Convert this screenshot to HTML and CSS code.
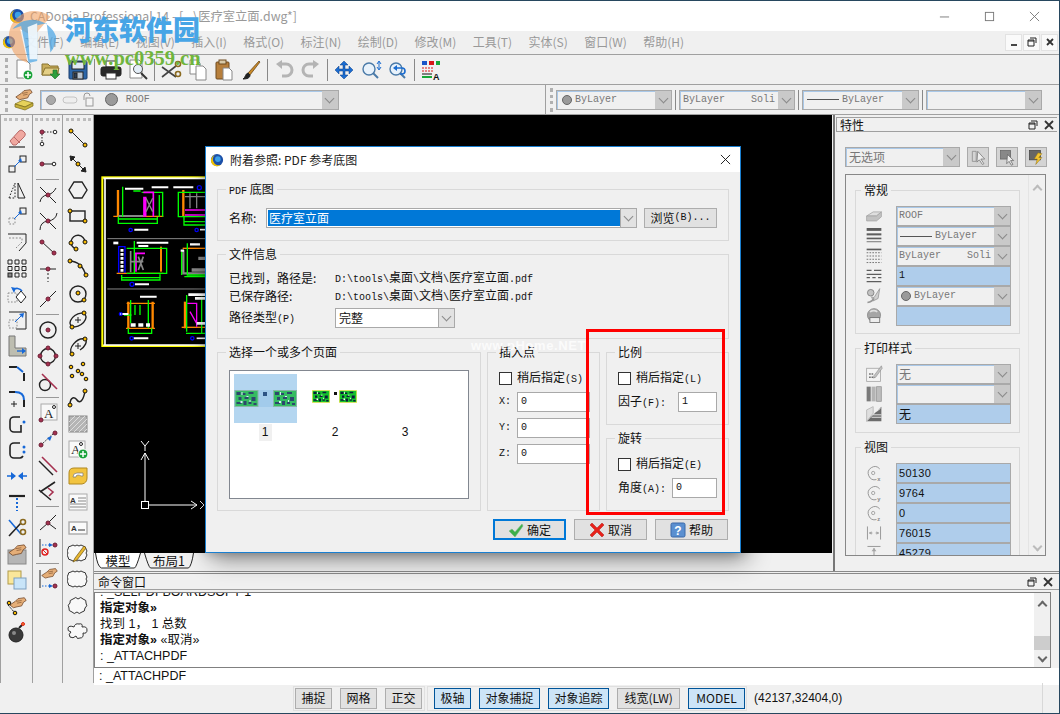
FILE: index.html
```html
<!DOCTYPE html>
<html lang="zh-CN">
<head>
<meta charset="utf-8">
<title>CADopia Professional 14</title>
<link rel="stylesheet" href="styles.css">
</head>
<body>
<svg class="defs">
  <symbol id="logo" viewBox="0 0 16 16"><circle cx="8" cy="8" r="7" fill="#1c4fa8"/><path d="M2 12a7 7 0 0 0 11 1 6 6 0 0 1-9-3 6 6 0 0 1 2-8 7 7 0 0 0-4 10z" fill="#f2c200"/><circle cx="9" cy="7" r="3.2" fill="#3aa0e8"/></symbol>
  <symbol id="hand" viewBox="0 0 22 22"><path d="M2 11l6-4 3-3 7-1 2 3-3 2-2 4-5 1-4 1z" fill="#e5ae78" stroke="#6a4022" stroke-width=".8"/><path d="M9 7l6-1M10 9l5-1" stroke="#6a4022" stroke-width=".6" fill="none"/></symbol>
  <symbol id="tile" viewBox="0 0 24 17"><rect width="24" height="17" fill="currentColor"/><rect x="1" y="1" width="22" height="15" fill="#17c12c"/><path d="M2 2h4v3H2zM8 3h3v2H8zM14 2h5v2h-5zM4 7h3v3H4zM10 7h4v2h-4zM17 7h4v4h-4zM2 12h5v2H2zM9 11h3v4H9zM14 12h3v2h-3zM19 13h3v2h-3z" fill="#0b1a3c"/><path d="M7 2h1v3H7zM12 6h2v1h-2zM6 11h2v2H6zM15 10h1v2h-1z" fill="#fff"/></symbol>
</svg>

<div class="app">
  <header class="titlebar">
    <svg class="logo16"><use href="#logo"/></svg>
    <span class="apptitle">CADopia Professional 14 - [...\医疗室立面.dwg*]</span>
    <div class="winctl">
      <svg class="wbtn" viewBox="0 0 12 12"><path d="M1 6.5h10"/></svg>
      <svg class="wbtn" viewBox="0 0 12 12"><rect x="1.5" y="1.5" width="9" height="9"/></svg>
      <svg class="wbtn" viewBox="0 0 12 12"><path d="M1 1l10 10M11 1L1 11"/></svg>
    </div>
  </header>

  <nav class="menubar">
    <svg class="logo-menu"><use href="#logo"/></svg>
    <ul class="menu">
      <li>文件(F)</li><li>编辑(E)</li><li>视图(V)</li><li>插入(I)</li><li>格式(O)</li><li>标注(N)</li><li>绘制(D)</li><li>修改(M)</li><li>工具(T)</li><li>实体(S)</li><li>窗口(W)</li><li>帮助(H)</li>
    </ul>
    <div class="mdi">
      <span class="mdibtn"><svg viewBox="0 0 10 10"><path d="M2 8h6" class="thick"/></svg></span>
      <span class="mdibtn"><svg viewBox="0 0 10 10"><path d="M3 1h6v5M1 3h6v6H1zM1 4h6" class="thin"/></svg></span>
      <span class="mdibtn"><svg viewBox="0 0 10 10"><path d="M2 2l6 6M8 2L2 8" class="thick"/></svg></span>
    </div>
  </nav>

  <div class="toolbar">
    <span class="vgrip"></span>
    <svg class="i tb" viewBox="0 0 22 22"><path class="paper" d="M4 1h9l4 4v14H4z"/><circle cx="15" cy="16" r="5" fill="#1ba23a" stroke="#fff"/><path d="M15 13v6M12 16h6" stroke="#fff" stroke-width="1.6"/></svg>
    <svg class="i tb" viewBox="0 0 22 22"><path d="M2 5h6l2 2h8v9H2z" fill="#c9ad5a" stroke="#8a7430"/><path d="M2 16l3-7h14l-2 7z" fill="#e4cf85" stroke="#8a7430"/><path d="M13 11h4v4h3l-5 5-5-5h3z" fill="#2e9e3c" stroke="#1b6a26" stroke-width=".6"/></svg>
    <svg class="i tb" viewBox="0 0 22 22"><rect x="2" y="2" width="18" height="18" rx="1" fill="#2c66a8" stroke="#1c3f6e"/><rect x="5" y="3" width="12" height="7" fill="#dfe8f2"/><rect x="6" y="13" width="10" height="7" fill="#b9c4d0"/><rect x="7" y="14" width="3" height="5" fill="#2c3f58"/></svg>
    <span class="vsep"></span>
    <svg class="i tb" viewBox="0 0 22 22"><rect x="6" y="2" width="10" height="6" fill="#fff" stroke="#333"/><rect x="1" y="8" width="20" height="9" rx="2" fill="#2a2a2a"/><rect x="6" y="14" width="10" height="6" fill="#fff" stroke="#333"/></svg>
    <svg class="i tb" viewBox="0 0 22 22"><path class="paper" d="M3 1h9l3 3v15H3z"/><circle cx="11" cy="10" r="4.5" fill="#e4eef8" stroke="#555"/><path d="M14 14l6 6" stroke="#333" stroke-width="2"/></svg>
    <span class="vsep"></span>
    <svg class="i tb" viewBox="0 0 22 22"><path d="M2 18L16 7M2 8l14 10" stroke="#444" stroke-width="1.6"/><circle cx="18" cy="5" r="2.5" stroke="#8a6a20" stroke-width="1.6"/><circle cx="18" cy="19" r="2.5" stroke="#8a6a20" stroke-width="1.6" transform="translate(0 -4)"/></svg>
    <svg class="i tb" viewBox="0 0 22 22"><path class="paper" d="M3 1h7l3 3v11H3z"/><path class="paper" d="M9 7h7l3 3v11H9z"/></svg>
    <svg class="i tb" viewBox="0 0 22 22"><rect x="3" y="3" width="13" height="17" rx="1" fill="#b77f3c" stroke="#6e4a1e"/><rect x="6" y="1" width="7" height="4" fill="#d8c9a8" stroke="#6e4a1e"/><path class="paper" d="M10 9h6l3 3v9h-9z"/></svg>
    <svg class="i tb" viewBox="0 0 22 22"><path d="M19 2L8 14l2 2L20 3z" fill="#c98a28" stroke="#5a3a10" stroke-width=".7"/><path d="M8 14c-3 1-2 4-5 6 4 0 7-1 7-4z" fill="#222"/></svg>
    <span class="vsep"></span>
    <svg class="i tb" viewBox="0 0 22 22"><path d="M7 5h6a5 5 0 0 1 0 12H9" stroke="#b4b4b4" stroke-width="3"/><path d="M9 1v9L3 5z" fill="#b4b4b4" stroke="none"/></svg>
    <svg class="i tb" viewBox="0 0 22 22"><path d="M15 5H9a5 5 0 0 0 0 12h4" stroke="#b4b4b4" stroke-width="3"/><path d="M13 1v9l6-5z" fill="#b4b4b4" stroke="none"/></svg>
    <span class="vsep"></span>
    <svg class="i tb" viewBox="0 0 22 22"><path d="M11 2l4 4h-3v4h4V7l4 4-4 4v-3h-4v4h3l-4 4-4-4h3v-4H6v3l-4-4 4-4v3h4V6H7z" fill="#1a6cd0" stroke="#0c3f86" stroke-width=".5"/></svg>
    <svg class="i tb" viewBox="0 0 22 22"><circle cx="9" cy="10" r="6" fill="#e8f2fb" stroke="#4a7aa8" stroke-width="1.4"/><path d="M13 14l5 5" stroke="#4a7aa8" stroke-width="2"/><path d="M19 3v7M17 5l2-3 2 3M17 8l2 3 2-3" stroke="#1a6cd0"/></svg>
    <svg class="i tb" viewBox="0 0 22 22"><circle cx="9" cy="10" r="6" fill="#e8f2fb" stroke="#4a7aa8" stroke-width="1.4"/><path d="M13 14l5 5" stroke="#4a7aa8" stroke-width="2"/><path d="M8 9h7a3 3 0 0 1 0 6h-2" stroke="#1a6cd0" stroke-width="1.6"/><path d="M10 6v6l-4-3z" fill="#1a6cd0" stroke="none"/></svg>
    <span class="vsep"></span>
    <svg class="i tb" viewBox="0 0 22 22"><path d="M2 2h5v4H2z" fill="#1a55c8" stroke="none"/><path d="M9 2h5v4H9z" fill="#d81818" stroke="none"/><path d="M16 2h4v4h-4z" fill="#18a838" stroke="none"/><path d="M2 9h12M2 12h12" stroke="#d81818" stroke-dasharray="2 1"/><path d="M2 15h10" stroke="#111"/><path d="M2 18h10" stroke="#18a838" stroke-width="2"/><text x="13" y="21" class="icon-a">A</text></svg>
  </div>

  <div class="toolbar tb2">
    <span class="vgrip"></span>
    <svg class="i tb" viewBox="0 0 22 22"><path d="M2 15l8-4 10 3-8 4z" fill="#e6d25a" stroke="#7a6a18" stroke-width=".7"/><path d="M2 18l10 3 8-4v-3l-8 4-10-3z" fill="#c8b23c" stroke="#7a6a18" stroke-width=".7"/><use href="#hand" x="1" y="-2" width="20" height="20"/></svg>
    <div class="combo layer">
      <span class="cval">
        <svg class="lyic" viewBox="0 0 58 16"><circle cx="7" cy="8" r="4.500" fill="#a8a8a8" stroke="#888"/><rect x="19" y="5" width="14" height="6" rx="3" stroke="#c4c4c4" fill="#eee"/><path d="M40 8V4a3 3 0 0 1 6 0" stroke="#999" fill="none"/><rect x="42" y="6" width="7" height="8" stroke="#999" fill="#f4f4f4"/></svg>
        <i class="dot big"></i><span class="m grey">ROOF</span>
      </span>
      <span class="arr"></span>
    </div>
    <span class="tb2-rest">
      <span class="vgrip g2"></span>
      <div class="combo c116"><span class="cval"><i class="dot"></i><span class="m grey">ByLayer</span></span><span class="arr"></span></div>
      <span class="bar"></span>
      <div class="combo c116"><span class="cval spread"><span class="m grey">ByLayer</span><span class="m grey">Soli</span></span><span class="arr"></span></div>
      <span class="bar"></span>
      <div class="combo c117"><span class="cval"><i class="lineglyph"></i><span class="m grey">ByLayer</span></span><span class="arr"></span></div>
      <span class="bar"></span>
      <div class="combo c116"><span class="cval"></span><span class="arr"></span></div>
    </span>
  </div>

  <main class="main">
    <aside class="lefttools">
      <div class="tcol">
        <span class="hgrip"></span>
        <svg class="i tl" viewBox="0 0 22 22"><path d="M4 14L13 4q2-2 4 0l2 2q1 2-1 4l-8 8H7z" fill="#f0a8a0" stroke="#b86a68"/><path d="M8 10l6 6" stroke="#b86a68"/><path d="M3 20h16" stroke="#777" stroke-width="2"/></svg>
        <svg class="i tl" viewBox="0 0 22 22"><rect x="3" y="13" width="6" height="6"/><rect x="14" y="3" width="6" height="6"/><path class="bl" d="M8 14l7-7"/><path class="bfl" d="M15 5l1 4-4-1z"/></svg>
        <svg class="i tl" viewBox="0 0 22 22"><path d="M3 19l6-15v15z" stroke-dasharray="1.6 1.6"/><path d="M12 4l7 15h-7z"/></svg>
        <svg class="i tl" viewBox="0 0 22 22"><rect x="3" y="13" width="6" height="6" stroke-dasharray="1.6 1.6" class="gs"/><rect x="14" y="3" width="6" height="6"/><path class="bl" d="M8 14l7-7"/><path class="bfl" d="M15 5l1 4-4-1z"/></svg>
        <svg class="i tl" viewBox="0 0 22 22"><path d="M2 3h18v9l-7 8"/><path class="gs" d="M3 7h13v4l-6 6" stroke-dasharray="1.8 1.6"/></svg>
        <svg class="i tl" viewBox="0 0 22 22"><path d="M2 3h4v4H2zM9 3h4v4H9zM16 3h4v4h-4zM2 9.500h4v4H2zM9 9.500h4v4H9zM16 9.500h4v4h-4zM9 16h4v4H9zM16 16h4v4h-4z"/><rect x="2" y="16" width="4" height="4" fill="#888"/></svg>
        <svg class="i tl" viewBox="0 0 22 22"><rect x="2" y="10" width="9" height="9" class="gs" stroke-dasharray="1.6 1.6"/><path d="M15 8l5 6-5 6-5-6z" fill="#fff"/><path class="bl" d="M7 7a6 6 0 0 1 9 1" stroke-width="1.6"/><path class="bfl" d="M5 4l3 6 2-5z"/></svg>
        <svg class="i tl" viewBox="0 0 22 22"><path d="M3 3h17v17H10"/><rect x="3" y="11" width="8" height="8" class="gs" stroke-dasharray="1.6 1.6"/><path class="bl" d="M9 13l8-8"/><path class="bfl" d="M18 4l-1 5-4-4z"/></svg>
        <svg class="i tl" viewBox="0 0 22 22"><path d="M3 1h6v12h11v8H3z" fill="#bdbdb0" stroke="#777"/><path class="bl" d="M11 16h7" stroke-width="1.4"/><path class="bfl" d="M20 16l-4 3v-6z"/></svg>
        <svg class="i tl" viewBox="0 0 22 22"><path d="M3 6h8" stroke-width="2"/><path class="bl" d="M11 6l6 5" stroke-width="2"/><path d="M18 12v8" stroke-width="2"/></svg>
        <svg class="i tl" viewBox="0 0 22 22"><path d="M3 5h6" stroke-width="2"/><path class="bl" d="M9 5q9 0 9 8" stroke-width="2"/><path d="M18 13v7" stroke-width="2"/><path d="M8 14v6M5 17h6"/></svg>
        <svg class="i tl" viewBox="0 0 22 22"><path d="M14 4H8a4 4 0 0 0-4 4v7a4 4 0 0 0 4 4h7v-7" stroke-width="1.6"/><circle class="bfl" cx="18" cy="9" r="1.5"/></svg>
        <svg class="i tl" viewBox="0 0 22 22"><path d="M14 4H8a4 4 0 0 0-4 4v7a4 4 0 0 0 4 4h6a4 4 0 0 0 3-2" stroke-width="1.6"/><circle class="bfl" cx="18" cy="8" r="1.5"/><circle class="bfl" cx="18" cy="13" r="1.5"/></svg>
        <svg class="i tl" viewBox="0 0 22 22"><path class="bl" d="M1 11h8M13 11h8" stroke-width="1.6"/><path class="bfl" d="M10 11L5 7v8zM12 11l5-4v8z"/></svg>
        <svg class="i tl" viewBox="0 0 22 22"><path d="M3 5h16" stroke-width="2.200"/><path class="bl" d="M11 7v13" stroke-width="2" stroke-dasharray="2 2"/></svg>
        <svg class="i tl" viewBox="0 0 22 22"><path class="bl" d="M3 3l12 14" stroke-width="1.6"/><path d="M3 19L15 6" stroke-width="1.6"/><circle cx="17" cy="5" r="2.500" stroke="#8a6a20" stroke-width="1.600"/><circle cx="17" cy="15" r="2.500" stroke="#8a6a20" stroke-width="1.600"/></svg>
        <svg class="i tl" viewBox="0 0 22 22"><rect x="2" y="7" width="18" height="14" class="hatch"/><use href="#hand" x="1" y="-1" width="21" height="21"/></svg>
        <svg class="i tl" viewBox="0 0 22 22"><rect x="2" y="2" width="13" height="13" fill="#fae79a" stroke="#b09a48"/><rect x="8" y="9" width="12" height="11" fill="#c8e4f8" stroke="#7c9fc0"/></svg>
        <svg class="i tl" viewBox="0 0 22 22"><use href="#hand" x="2" y="0" width="20" height="20"/><path d="M2 10l7 8" stroke-dasharray="2 1"/><circle class="y" cx="3" cy="8" r="1.800"/><circle class="y" cx="9" cy="18" r="1.800"/></svg>
        <svg class="i tl" viewBox="0 0 22 22"><circle cx="10" cy="14" r="7" fill="#3a3a3a" stroke="#222"/><circle cx="8" cy="12" r="2" fill="#8a8a8a" stroke="none"/><path d="M13 7l3-3" stroke-width="2"/><circle cx="17" cy="3" r="1.500" fill="#f08020" stroke="#e02020"/></svg>
      </div>

      <div class="tcol">
        <span class="hgrip"></span>
        <svg class="i tl" viewBox="0 0 22 22"><path d="M7 5h10M5 7v8" stroke-dasharray="1.500 1.500"/><circle class="r" cx="5" cy="5" r="2"/><circle cx="18" cy="5" r="1.800" fill="#fff"/><circle cx="5" cy="17" r="1.800" fill="#fff"/></svg>
        <svg class="i tl" viewBox="0 0 22 22"><path d="M5 11h11"/><circle class="r" cx="5" cy="11" r="2"/><circle cx="17" cy="11" r="1.800" fill="#fff"/></svg>
        <span class="hsep"></span>
        <svg class="i tl" viewBox="0 0 22 22"><path d="M3 3l16 16M3 18q1-6 7-7t9-7" stroke-dasharray="none"/><circle class="r" cx="11" cy="11" r="2"/></svg>
        <svg class="i tl" viewBox="0 0 22 22"><path d="M3 3l16 16M3 20q0-8 8-9t9-8"/><circle class="r" cx="11" cy="11" r="2"/></svg>
        <svg class="i tl" viewBox="0 0 22 22"><path d="M4 5l14 13"/><circle class="r" cx="5" cy="6" r="2"/><circle class="r" cx="17" cy="17" r="2"/></svg>
        <svg class="i tl" viewBox="0 0 22 22"><path d="M3 7h16"/><path d="M11 7v13" stroke-dasharray="2 2"/><circle class="r" cx="11" cy="7" r="2"/></svg>
        <svg class="i tl" viewBox="0 0 22 22"><path d="M3 19L19 3"/><circle class="r" cx="11" cy="11" r="2"/></svg>
        <span class="hsep"></span>
        <svg class="i tl" viewBox="0 0 22 22"><circle cx="11" cy="11" r="8" stroke-width="1.400"/><circle class="r" cx="11" cy="11" r="2"/></svg>
        <svg class="i tl" viewBox="0 0 22 22"><circle cx="11" cy="11" r="7.500" stroke-width="1.400"/><circle class="r" cx="11" cy="3" r="2"/><circle class="r" cx="3" cy="11" r="2"/><circle class="r" cx="19" cy="11" r="2"/><circle class="r" cx="11" cy="19" r="2"/></svg>
        <svg class="i tl" viewBox="0 0 22 22"><circle cx="8" cy="14" r="5.500" stroke-width="1.400"/><path d="M5 3l15 15" stroke="#a5304f" stroke-width="1.600"/></svg>
        <span class="hsep"></span>
        <svg class="i tl" viewBox="0 0 22 22"><rect x="4" y="2" width="16" height="16" fill="#f8f8f8" stroke="#aaa"/><text x="7" y="16" class="icon-text">A</text><circle cx="17" cy="5" r="1.500"/><circle class="r" cx="4" cy="18" r="2"/></svg>
        <svg class="i tl" viewBox="0 0 22 22"><path d="M4 17l14-13" stroke-dasharray="1.500 1"/><circle class="r" cx="4" cy="17" r="2"/><circle class="r" cx="18" cy="5" r="2"/><path class="bfl" d="M15 8l-5 2 3 3z"/></svg>
        <svg class="i tl" viewBox="0 0 22 22"><path d="M2 7l14 14" stroke-width="1.400"/><path d="M5 3l15 15" stroke="#a5304f" stroke-width="1.600"/></svg>
        <svg class="i tl" viewBox="0 0 22 22"><path d="M2 10l12 10M3 12l15-10" stroke-width="1.600"/><path d="M11 8l5 4-4 4" stroke="#a5304f" stroke-width="1.600"/></svg>
        <span class="hsep"></span>
        <svg class="i tl" viewBox="0 0 22 22"><path d="M3 19l8-7 8-8M11 12l8 6"/><circle class="r" cx="11" cy="12" r="2"/></svg>
        <svg class="i tl" viewBox="0 0 22 22"><path d="M3 2v18" /><path d="M5 8h8" stroke-dasharray="1.500 1.500" class="bl"/><path class="bfl" d="M16 8l-4 2V6z"/><circle class="r" cx="18" cy="8" r="2"/><circle cx="8" cy="15" r="3" stroke="#e02020" stroke-width="1.400"/><path d="M6 13l4 4" stroke="#e02020"/></svg>
        <span class="hsep"></span>
        <svg class="i tl" viewBox="0 0 22 22"><path d="M3 2v18"/><use href="#hand" x="3" y="-2" width="19" height="19"/><path class="bl" d="M5 18h8" stroke-dasharray="1.500 1.500"/><path class="bfl" d="M16 18l-4 2v-4z"/><circle class="r" cx="18" cy="18" r="2"/></svg>
      </div>

      <div class="tcol last">
        <span class="hgrip"></span>
        <svg class="i tl" viewBox="0 0 22 22"><path d="M4 4l14 14"/><circle class="y" cx="4" cy="4" r="2"/><circle class="y" cx="18" cy="18" r="2"/></svg>
        <svg class="i tl" viewBox="0 0 22 22"><path d="M3 3l16 16"/><path d="M3 3l5 1-4 4zM19 19l-5-1 4-4z" fill="#222"/><circle class="y" cx="11" cy="11" r="2"/></svg>
        <svg class="i tl" viewBox="0 0 22 22"><path d="M7 3h8l5 8-5 8H7l-5-8z" stroke-width="1.400"/></svg>
        <svg class="i tl" viewBox="0 0 22 22"><rect x="3" y="6" width="15" height="10" stroke-width="1.400"/><circle class="y" cx="3" cy="6" r="2"/><circle class="y" cx="18" cy="16" r="2"/></svg>
        <svg class="i tl" viewBox="0 0 22 22"><path d="M9 18a7 7 0 1 1 9-7" stroke-width="1.400"/><circle class="y" cx="4" cy="12" r="2"/><circle class="y" cx="9" cy="18" r="2"/><circle class="y" cx="18" cy="11" r="2"/></svg>
        <svg class="i tl" viewBox="0 0 22 22"><path d="M2 4q13 0 17 15" stroke-width="1.400"/><circle class="y" cx="3" cy="4" r="2"/><circle class="y" cx="13" cy="9" r="2"/><circle class="y" cx="19" cy="18" r="2"/></svg>
        <svg class="i tl" viewBox="0 0 22 22"><circle cx="11" cy="11" r="8" stroke-width="1.400"/><circle class="y" cx="11" cy="10" r="2"/><circle class="y" cx="17" cy="17" r="2"/></svg>
        <svg class="i tl" viewBox="0 0 22 22"><ellipse cx="11" cy="11" rx="9" ry="5.500" transform="rotate(-35 11 11)" stroke-width="1.400"/><path d="M11 8v6M8 11h6"/><circle class="y" cx="17" cy="4" r="2"/><circle class="y" cx="5" cy="18" r="2"/></svg>
        <svg class="i tl" viewBox="0 0 22 22"><path d="M5 19C0 14 10 2 18 4c3 2 0 8-5 11" stroke-width="1.400"/><path d="M11 8v6M8 11h6"/><circle class="y" cx="18" cy="4" r="2"/><circle class="y" cx="5" cy="19" r="2"/></svg>
        <svg class="i tl" viewBox="0 0 22 22"><circle class="y" cx="4" cy="6" r="1.800"/><circle class="y" cx="16" cy="3" r="1.800"/><circle class="y" cx="11" cy="10" r="1.800"/><circle class="y" cx="5" cy="15" r="1.800"/><circle class="y" cx="15" cy="13" r="1.800"/><circle class="y" cx="19" cy="18" r="1.800"/></svg>
        <svg class="i tl" viewBox="0 0 22 22"><path d="M3 18c0-9 5-8 7-5s6 3 8-9" stroke-width="1.500"/><circle class="y" cx="3" cy="18" r="2"/><circle class="y" cx="18" cy="4" r="2"/></svg>
        <svg class="i tl" viewBox="0 0 22 22"><rect x="2" y="3" width="18" height="16" class="hatch"/><path d="M2 9l6-6M2 14l11-11M2 19L18 3M7 19L20 6M12 19l8-8M17 19l3-3" stroke="#e8e8e8" stroke-width=".8"/></svg>
        <svg class="i tl" viewBox="0 0 22 22"><rect x="2" y="2" width="16" height="16" fill="#fafafa" stroke="#aaa"/><text x="4" y="15" class="icon-text">A</text><circle cx="14" cy="5" r="1.500"/><circle cx="16" cy="15" r="5" fill="#1ba23a" stroke="#fff"/><path d="M16 12v6M13 15h6" stroke="#fff" stroke-width="1.500"/></svg>
        <svg class="i tl" viewBox="0 0 22 22"><path d="M2 8q0-5 5-5h13v10q0 5-5 6H2z" fill="#f2c440" stroke="#b08820"/><path d="M6 12q0-4 4-4h6v3h-2q-1-1-3-1t-2 2z" fill="#fff" stroke="#777" stroke-width=".7"/></svg>
        <svg class="i tl" viewBox="0 0 22 22"><rect x="2" y="3" width="18" height="16" fill="#fafafa" stroke="#aaa"/><text x="3" y="12" class="icon-small">A</text><path d="M11 7h8M11 10h8M3 13h16M3 16h16" stroke="#888"/></svg>
        <svg class="i tl" viewBox="0 0 22 22"><rect x="2" y="5" width="18" height="12" fill="#fafafa" stroke="#aaa" stroke-width="1.400"/><text x="4" y="14" class="icon-small">A</text><path d="M11 13h7" stroke="#333"/></svg>
        <svg class="i tl" viewBox="0 0 22 22"><path class="cloud" d="M4 3q2-2 4 0 2-2 4 0 2-2 4 0 3 0 3 3 2 2 0 4 2 2 0 4 0 3-3 3-2 2-4 0-2 2-4 0-2 2-4 0-3 0-3-3-2-2 0-4-2-2 0-4 0-3 3-3z"/><path d="M17 3L8 15l-2 4 4-2L19 5z" fill="#e8b830" stroke="#6a5010" stroke-width=".7"/></svg>
        <svg class="i tl" viewBox="0 0 22 22"><path class="cloud" d="M4 3q2-2 4 0 2-2 4 0 2-2 4 0 3 0 3 3 2 2 0 4 2 2 0 4 0 3-3 3-2 2-4 0-2 2-4 0-2 2-4 0-3 0-3-3-2-2 0-4-2-2 0-4 0-3 3-3z"/></svg>
        <svg class="i tl" viewBox="0 0 22 22"><path class="cloud" d="M6 4q3-3 5 0 3-3 5 0 4 1 3 4 2 3-1 5 0 4-3 4-3 3-5 0-3 3-5 0-4-1-3-4-2-3 1-5-1-3 3-4z"/></svg>
        <svg class="i tl" viewBox="0 0 22 22"><path class="cloud" d="M7 6q1-4 5-3 4-1 3 3 5-1 5 3 0 4-4 3 1 5-3 5-3 2-4-2-3 3-6 1-2-3 1-5-4-1-3-4 1-3 6-1z"/></svg>
      </div>
    </aside>

    <div class="rightside">
      <div class="upper">
        <section class="canvascol">
          <svg class="drawing" viewBox="0 0 738 438">
            <g transform="translate(-94 0) scale(.3333)" fill="none">
              <rect x="307" y="187" width="420" height="506" stroke="#ff0" stroke-width="6"/>
              <path d="M315 190V690M310 190H720M310 690H720" stroke="#fff" stroke-width="5"/>
              <path d="M322 371H720M322 522H720" stroke="#888" stroke-width="3"/>
              <g stroke-width="4">
                <path d="M354 225V305" stroke="#f80" stroke-width="7"/><path d="M340 304H490" stroke="#f80"/>
                <path d="M355 303H430" stroke="#888" stroke-width="6"/>
                <path d="M368 215V305M355 305V325H472V305M355 312H472M425 232H488V305M478 240V305M400 228H422" stroke="#0f0"/>
                <path d="M430 232H460V305M432 245V305M437 245V305" stroke="#f0f" stroke-width="5"/>
                <path d="M438 250L458 290M458 250L438 290" stroke="#888" stroke-width="4"/>
                <path d="M375 221H430M455 217H505M520 217H580M403 344H445" stroke="#fff" stroke-width="6"/>
                <circle cx="392" cy="345" r="5" stroke="#00f" stroke-width="4"/><circle cx="590" cy="345" r="5" stroke="#00f" stroke-width="4"/><circle cx="598" cy="218" r="6" stroke="#00f" stroke-width="4"/>
                <path d="M550 225V305" stroke="#f80" stroke-width="7"/><path d="M535 232H620V305H535ZM552 305V330H620M552 320H620" stroke="#0f0"/>
                <path d="M555 285H620M555 300H620" stroke="#f0f" stroke-width="5"/><path d="M555 245H620M570 235V280M590 235V280" stroke="#888" stroke-width="4"/><path d="M600 344H640" stroke="#fff" stroke-width="5"/>
                <path d="M356 395H375V475H356Z" stroke="#00f"/><path d="M366 402V470" stroke="#fff" stroke-dasharray="8 4" stroke-width="9"/>
                <path d="M350 475H490" stroke="#f80"/><path d="M483 395V470" stroke="#f80" stroke-width="6"/>
                <path d="M380 400H500V475H380M403 378V475M365 480V495H480V478M365 488H480" stroke="#0f0"/>
                <path d="M405 415H435M408 415V470" stroke="#f0f" stroke-width="5"/>
                <path d="M392 408V472M392 440H430M415 425L430 465M430 425L415 465" stroke="#888" stroke-width="5"/>
                <path d="M410 383H505M415 393H445M405 508H447" stroke="#fff" stroke-width="6"/><path d="M340 384H355" stroke="#fff" stroke-width="8"/><circle cx="396" cy="508" r="6" stroke="#00f" stroke-width="4"/>
                <path d="M550 405V475H620" stroke="#888" stroke-width="7"/><path d="M548 400H620" stroke="#f80"/>
                <path d="M545 410V480M562 385V480H620M553 485H620" stroke="#0f0"/>
                <path d="M570 388H600M542 407H552" stroke="#fff" stroke-width="7"/><path d="M575 465H620M595 430H620" stroke="#888" stroke-width="10"/>
                <path d="M385 560V640M458 560V640" stroke="#f80" stroke-width="7"/><path d="M378 640H465M380 565H465" stroke="#f80"/>
                <path d="M392 555V625M445 555V640M385 640V655H455V640M372 600H395" stroke="#0f0"/><path d="M420 570V600M405 570V600" stroke="#0f0"/>
                <path d="M392 630H450" stroke="#fff" stroke-width="10" stroke-dasharray="15 8"/><path d="M420 545H470M360 597H385M400 670H445" stroke="#fff" stroke-width="6"/>
                <circle cx="395" cy="670" r="5" stroke="#00f" stroke-width="4"/><circle cx="362" cy="597" r="4" stroke="#00f" stroke-width="4"/>
                <path d="M555 560V640" stroke="#f80" stroke-width="7"/><path d="M545 637H620" stroke="#f80"/>
                <path d="M562 565H590V635M570 590L590 625" stroke="#f0f"/><path d="M560 540V650M558 655H620M605 545V655" stroke="#0f0"/>
                <path d="M565 539H620M585 550H620M590 625H620" stroke="#fff" stroke-width="8"/><path d="M590 670H620" stroke="#fff" stroke-width="5"/><circle cx="577" cy="670" r="5" stroke="#00f" stroke-width="4"/>
              </g>
            </g>
            <g transform="translate(-94 -115)" stroke="#fff" fill="none">
              <rect x="141.500" y="501.500" width="7" height="7"/>
              <path d="M145 501V453M141 460l4-7 4 7M149 505H197M191 501l6 4-6 4M141 441l4 5 4-5M145 446v5M200 501l4 4-4 4"/>
            </g>
          </svg>
          <div class="tabs">
            <div class="tab active">
              <svg class="tabshape" viewBox="0 0 46 18" preserveAspectRatio="none"><path d="M.5 0q2 14 6 15h33q2-1 6-15" fill="#fff" stroke="#222"/></svg>
              <span>模型</span>
            </div>
            <div class="tab second">
              <svg class="tabshape" viewBox="0 0 50 18" preserveAspectRatio="none"><path d="M.5 0q4 14 6 15h38q3-2 5-15" fill="#f0f0f0" stroke="#222"/></svg>
              <span>布局1</span>
            </div>
          </div>
        </section>

        <aside class="panel">
          <div class="paneltitle">
            <span>特性</span>
            <div class="paneltools">
              <svg viewBox="0 0 10 10"><path d="M3 1h6v5M1 3h6v6H1zM1 4h6" class="thin"/></svg>
              <svg viewBox="0 0 10 10"><path d="M1 1l8 8M9 1L1 9" class="thick"/></svg>
            </div>
          </div>
          <div class="selectrow">
            <div class="combo c115 selectcombo"><span class="cval grey">无选项</span><span class="arr"></span></div>
            <span class="pbtn"><svg class="i s18" viewBox="0 0 22 22"><path d="M3 3h5v13H3z" class="gs"/><path d="M10 3l9 10h-5l4 6-2 1-4-6-3 3z" fill="#eee" stroke="#777"/></svg></span>
            <span class="pbtn"><svg class="i s18" viewBox="0 0 22 22"><rect x="2" y="2" width="13" height="11" fill="#888" stroke="#666"/><path d="M11 7l8 8h-4l3 5-2 1-3-5-3 3z" fill="#eee" stroke="#666"/></svg></span>
            <span class="pbtn"><svg class="i s18" viewBox="0 0 22 22"><rect x="2" y="2" width="14" height="12" fill="#666" stroke="#444"/><path d="M13 5l5 1-4 5h4l-8 9 2-7H8z" fill="#f2c430" stroke="#8a6a10" stroke-width=".6"/></svg></span>
          </div>
          <div class="propbox">
            <div class="propscroll">
              <fieldset class="grp pgrp g1">
                <legend>常规</legend>
                <div class="prow">
                  <svg class="i pi" viewBox="0 0 22 22"><path d="M2 11l8-5h10l-6 5z" fill="#ddd" stroke="#999"/><path d="M2 11h12l6-5v6l-6 5H2z" fill="#bbb" stroke="#999"/></svg>
                  <div class="pf"><span class="cval"><span class="m grey">ROOF</span></span><span class="arr"></span></div>
                </div>
                <div class="prow">
                  <svg class="i pi" viewBox="0 0 22 22"><path d="M2 3h18" stroke="#444" stroke-width="3.500"/><path d="M2 9h18" stroke="#444" stroke-width="2.500"/><path d="M2 14h18" stroke="#444" stroke-width="2"/><path d="M2 18h18" stroke="#444"/></svg>
                  <div class="pf"><span class="cval"><i class="lineglyph"></i><span class="m grey">ByLayer</span></span><span class="arr"></span></div>
                </div>
                <div class="prow">
                  <svg class="i pi" viewBox="0 0 22 22"><path d="M2 3h18" stroke="#444" stroke-width="2"/><path d="M2 7h18M2 11h18M2 15h18M2 19h18" stroke="#444" stroke-dasharray="2 1.500"/></svg>
                  <div class="pf"><span class="cval spread"><span class="m grey">ByLayer</span><span class="m grey">Soli</span></span><span class="arr"></span></div>
                </div>
                <div class="prow">
                  <svg class="i pi" viewBox="0 0 22 22"><path d="M2 4h6M11 4h9M2 9h18M2 13h4M9 13h4M16 13h4M2 18h18" stroke="#444" stroke-width="1.500"/></svg>
                  <div class="pf on"><span class="cval"><span class="m">1</span></span></div>
                </div>
                <div class="prow">
                  <svg class="i pi" viewBox="0 0 22 22"><path d="M18 2l-7 11-3-1 2 5 6-3z" fill="#ccc" stroke="#888"/><circle cx="7" cy="7" r="4" fill="#bbb" stroke="#666"/><path d="M3 19q6-1 8-5" stroke="#888" stroke-width="2"/></svg>
                  <div class="pf"><span class="cval"><i class="dot"></i><span class="m grey">ByLayer</span></span><span class="arr"></span></div>
                </div>
                <div class="prow">
                  <svg class="i pi" viewBox="0 0 22 22"><circle cx="11" cy="10" r="8" fill="#999" stroke="#777"/><path d="M6 6q5-3 9 0" stroke="#ddd" stroke-width="2"/><rect x="6" y="13" width="12" height="6" fill="#eee" stroke="#555"/></svg>
                  <div class="pf on"><span class="cval"></span></div>
                </div>
              </fieldset>
              <fieldset class="grp pgrp g2h">
                <legend>打印样式</legend>
                <div class="prow">
                  <svg class="i pi" viewBox="0 0 22 22"><rect x="2" y="4" width="17" height="16" fill="#f4f4f4" stroke="#999"/><path d="M5 11h5M5 15h7" stroke="#555" stroke-width="2" stroke-dasharray="2 1"/><path d="M20 1l-9 12-1 3 3-1L21 4z" fill="#bbb" stroke="#777" stroke-width=".7"/></svg>
                  <div class="pf"><span class="cval grey">无</span><span class="arr"></span></div>
                </div>
                <div class="prow">
                  <svg class="i pi" viewBox="0 0 22 22"><path d="M2 2h5v18H2z" fill="#666" stroke="none"/><path d="M8 2h5v18H8z" fill="#aaa" stroke="none"/><path d="M14 2h6v18h-6z" class="hatch"/></svg>
                  <div class="pf"><span class="cval"></span><span class="arr"></span></div>
                </div>
                <div class="prow">
                  <svg class="i pi" viewBox="0 0 22 22"><path d="M2 20L20 2v18z" fill="#555" stroke="none"/><path d="M10 12h10M8 15h12M14 8l5-4" stroke="#fff"/><path d="M2 20V6l8-4v8z" fill="#ddd" stroke="#aaa"/></svg>
                  <div class="pf on"><span class="cval">无</span></div>
                </div>
              </fieldset>
              <fieldset class="grp pgrp g3h">
                <legend>视图</legend>
                <div class="prow"><svg class="i pi" viewBox="0 0 22 22"><path d="M18 6A8 8 0 1 0 14 19" stroke="#888" stroke-width="1.200"/><circle cx="10" cy="11" r="2" stroke="#888"/><text x="15" y="21" class="axis">x</text></svg><div class="pf on"><span class="cval"><span class="num">50130</span></span></div></div>
                <div class="prow"><svg class="i pi" viewBox="0 0 22 22"><path d="M18 6A8 8 0 1 0 14 19" stroke="#888" stroke-width="1.200"/><circle cx="10" cy="11" r="2" stroke="#888"/><text x="15" y="21" class="axis">y</text></svg><div class="pf on"><span class="cval"><span class="num">9764</span></span></div></div>
                <div class="prow"><svg class="i pi" viewBox="0 0 22 22"><path d="M18 6A8 8 0 1 0 14 19" stroke="#888" stroke-width="1.200"/><circle cx="10" cy="11" r="2" stroke="#888"/><text x="15" y="21" class="axis">z</text></svg><div class="pf on"><span class="cval"><span class="num">0</span></span></div></div>
                <div class="prow"><svg class="i pi" viewBox="0 0 22 22"><path d="M3 3v16M19 3v16M5 11h4M13 11h4" stroke="#777"/><path d="M5 11l3-2v4zM17 11l-3-2v4z" fill="#999" stroke="none"/></svg><div class="pf on"><span class="cval"><span class="num">76015</span></span></div></div>
                <div class="prow"><svg class="i pi" viewBox="0 0 22 22"><path d="M3 3h16M11 5v12" stroke="#777"/><path d="M11 5l-3 4h6z" fill="#999" stroke="none"/></svg><div class="pf on"><span class="cval"><span class="num">45279</span></span></div></div>
              </fieldset>
            </div>
            <div class="propbar">
              <i class="chev up"></i>
              <i class="chev"></i>
            </div>
          </div>
        </aside>
      </div>

      <section class="cmdwin">
        <div class="cmdtitle">
          <span>命令窗口</span>
          <div class="paneltools">
            <svg viewBox="0 0 10 10"><path d="M3 1h6v5M1 3h6v6H1zM1 4h6" class="thin"/></svg>
            <svg viewBox="0 0 10 10"><path d="M1 1l8 8M9 1L1 9" class="thick"/></svg>
          </div>
        </div>
        <div class="history">
          <div class="lines">
            <p class="clip">: _SELPDFBOARDSOPT 1</p>
            <p><b>指定对象»</b></p>
            <p>找到 1， 1 总数</p>
            <p><b>指定对象»</b> «取消»</p>
            <p>: _ATTACHPDF</p>
          </div>
          <div class="cmdscroll">
            <i class="chev up dark"></i>
            <span class="spacer"></span>
            <span class="thumb"></span>
            <i class="chev dark"></i>
          </div>
        </div>
        <div class="cmdinput">: _ATTACHPDF</div>
      </section>
    </div>
  </main>

  <footer class="status">
    <div class="sgroup first">
      <span class="sbtn">捕捉</span><span class="sbtn">网格</span><span class="sbtn">正交</span>
    </div>
    <div class="sgroup second">
      <span class="sbtn on">极轴</span><span class="sbtn on">对象捕捉</span><span class="sbtn on">对象追踪</span><span class="sbtn lw">线宽(LW)</span><span class="sbtn on model">MODEL</span>
    </div>
    <span class="coords">(42137,32404,0)</span>
    <span class="sizegrip"></span>
  </footer>

  <section class="dialog">
    <div class="dtitle">
      <svg class="dlogo"><use href="#logo"/></svg>
      <span>附着参照: PDF 参考底图</span>
      <svg class="dclose" viewBox="0 0 12 12"><path d="M1 1l10 10M11 1L1 11"/></svg>
    </div>
    <div class="dbody">
      <fieldset class="grp h60">
        <legend><span class="m">PDF</span> 底图</legend>
        <div class="drow">
          <label class="lbl36">名称:</label>
          <div class="dcombo sel"><span class="cval">医疗室立面</span><span class="arr"></span></div>
          <button class="btn browse">浏览<span class="m">(B)...</span></button>
        </div>
      </fieldset>
      <fieldset class="grp h93">
        <legend>文件信息</legend>
        <div class="irow"><span class="ilbl">已找到，路径是:</span><span><span class="m">D:\tools\</span>桌面<span class="m">\</span>文档<span class="m">\</span>医疗室立面<span class="m">.pdf</span></span></div>
        <div class="irow"><span class="ilbl">已保存路径:</span><span><span class="m">D:\tools\</span>桌面<span class="m">\</span>文档<span class="m">\</span>医疗室立面<span class="m">.pdf</span></span></div>
        <div class="irow type"><span class="ilbl">路径类型<span class="m">(P)</span></span><div class="dcombo w120"><span class="cval">完整</span><span class="arr"></span></div></div>
      </fieldset>
      <div class="lower">
        <fieldset class="grp pages">
          <legend>选择一个或多个页面</legend>
          <div class="listbox">
            <div class="page">
              <svg class="thumb-img selbg" viewBox="0 0 63 49"><use href="#tile" x="0" y="16" width="25" height="17" class="tg"/><rect x="29" y="18" width="4" height="4" fill="#0b2a5c"/><use href="#tile" x="39" y="16" width="24" height="17" class="tg"/><rect x="0" y="16" width="63" height="17" fill="#7ab4e0" opacity=".3"/></svg>
              <span class="pnum cur">1</span>
            </div>
            <div class="page">
              <svg class="thumb-img" viewBox="0 0 63 49"><use href="#tile" x="8" y="16" width="18" height="13" class="ty"/><rect x="30" y="18" width="3" height="3" fill="#111"/><use href="#tile" x="35" y="16" width="18" height="13" class="ty"/></svg>
              <span class="pnum">2</span>
            </div>
            <div class="page">
              <span class="thumb-img"></span>
              <span class="pnum">3</span>
            </div>
          </div>
        </fieldset>
        <fieldset class="grp insert">
          <legend>插入点</legend>
          <label class="chk"><i class="box"></i><span>稍后指定<span class="m">(S)</span></span></label>
          <div class="xyz"><span class="m">X:</span><span class="inp m">0</span></div>
          <div class="xyz"><span class="m">Y:</span><span class="inp m">0</span></div>
          <div class="xyz"><span class="m">Z:</span><span class="inp m">0</span></div>
        </fieldset>
        <div class="stack">
          <fieldset class="grp h81">
            <legend>比例</legend>
            <label class="chk"><i class="box"></i><span>稍后指定<span class="m">(L)</span></span></label>
            <div class="frow"><span>因子<span class="m">(F):</span></span><span class="inp m w39">1</span></div>
          </fieldset>
          <fieldset class="grp h81">
            <legend>旋转</legend>
            <label class="chk"><i class="box"></i><span>稍后指定<span class="m">(E)</span></span></label>
            <div class="frow"><span>角度<span class="m">(A):</span></span><span class="inp m w45">0</span></div>
          </fieldset>
        </div>
      </div>
      <div class="actions">
        <button class="btn act def"><svg class="i s16" viewBox="0 0 16 16"><path d="M1 9l3-2 3 3 7-8 1 2-8 11z" fill="#3db04a" stroke="#7ab885" stroke-width=".6"/></svg>确定</button>
        <button class="btn act"><svg class="i s16" viewBox="0 0 16 16"><path d="M1 3l2-2 5 5 5-5 2 2-5 5 5 5-2 2-5-5-5 5-2-2 5-5z" fill="#e8211a" stroke="#b01810" stroke-width=".5"/></svg>取消</button>
        <button class="btn act"><svg class="i s16" viewBox="0 0 16 16"><rect x="1" y="1" width="14" height="14" rx="1.500" fill="#5a8fd0" stroke="#3a68a8"/><text x="4.300" y="12.500" class="qmark">?</text></svg>帮助</button>
      </div>
    </div>
  </section>

  <div class="redbox"></div>
  <div class="wm-net">www.pHome.NET</div>

  <div class="watermark">
    <svg class="wm-logo" viewBox="0 0 56 56"><path d="M6 38A27 27 0 0 1 48 7L30 28 16 20l8 36A27 27 0 0 1 6 38z" fill="#f0a060" opacity=".6"/><path d="M8 20A27 27 0 0 1 54 28a27 27 0 0 1-6 17L44 14l-10 2 0 38-9 2L17 17z" fill="#45a3e4" opacity=".7"/><path d="M24 18l10-4v38h-8z" fill="#fff" opacity=".85"/></svg>
    <div class="wm-text">
      <strong>河东软件园</strong>
      <em>www.pc0359.cn</em>
    </div>
  </div>
</div>
</body>
</html>
```

FILE: styles.css
```css
* { box-sizing: border-box; }
html, body { margin: 0; padding: 0; }
body { width: 1060px; height: 714px; overflow: hidden; font: 12px/16px "Noto Sans CJK SC", "Liberation Sans", sans-serif; color: #111; }
.defs { display: none; }
.app { position: relative; width: 1060px; height: 714px; display: flex; flex-direction: column; background: #f0f0f0; border-top: 1px solid #27475f; border-bottom: 1px solid #27475f; border-right: 1px solid #27475f; overflow: hidden; }
.m { font-family: "Liberation Mono", "DejaVu Sans Mono", monospace; font-size: 10px; }
.grey { color: #777; }

/* Title + menu */
.titlebar { height: 30px; flex: none; background: #fff; display: flex; align-items: center; padding-left: 9px; color: #999; }
.logo16 { width: 16px; height: 16px; margin-right: 5px; }
.apptitle { font-size: 12.300px; }
.winctl { margin-left: auto; display: flex; gap: 34px; padding-right: 19px; }
.wbtn { width: 11px; height: 11px; fill: none; stroke: #777; stroke-width: 1; }
.menubar { height: 24px; flex: none; display: flex; align-items: center; padding: 0 0 1px 2px; border-bottom: 1px solid #a0a0a0; color: #999; }
.logo-menu { width: 14px; height: 14px; }
.menu { display: flex; gap: 16.400px; list-style: none; margin: 0 0 0 9px; padding: 0; }
.mdi { margin-left: auto; display: flex; gap: 1px; padding-right: 1px; }
.mdibtn { width: 17px; height: 17px; background: #fafafa; border: 1px solid #e2e2e2; display: flex; align-items: center; justify-content: center; }
.mdibtn svg, .paneltools svg { width: 10px; height: 10px; }
.thick { stroke: #333; stroke-width: 1.800; fill: none; }
.thin { stroke: #222; stroke-width: 1; fill: none; }

/* Toolbars */
.toolbar { height: 30px; flex: none; display: flex; align-items: center; padding-left: 5px; border-bottom: 1px solid #a0a0a0; }
.vgrip { width: 3px; height: 24px; border-left: 3px dotted #b0b0b0; margin-right: 3px; }
.vsep { width: 1px; height: 22px; background: #888; margin: 0 2.800px; }
.i { fill: none; stroke: #222; stroke-width: 1; flex: none; }
.tb { width: 22px; height: 22px; margin: 0 2.350px; }
.paper { fill: #fff; stroke: #888; }
.icon-a { font: bold 9px "Liberation Sans", sans-serif; fill: #111; stroke: none; }
.icon-text { font: 13px "Liberation Serif", serif; fill: #222; stroke: none; }
.icon-small { font: bold 8px "Liberation Sans", sans-serif; fill: #333; stroke: none; }
.axis { font: bold 7px "Liberation Sans", sans-serif; fill: #777; stroke: none; }
.qmark { font: bold 12px "Liberation Sans", sans-serif; fill: #fff; stroke: none; }
.tb2 { height: 30px; }
.tb2-rest { margin-left: auto; display: flex; align-items: center; height: 100%; border-left: 1px solid #a0a0a0; padding-left: 4px; padding-right: 17px; gap: 3px; }
.g2 { margin-right: 0; }
.bar { width: 1px; height: 20px; background: #888; }

/* Combos */
.combo { height: 20px; flex: none; display: flex; border: 1px solid #a9a9a9; background: #f0f0f0; box-shadow: inset 1px 1px 0 #a9c8e8; }
.layer { width: 299px; margin-left: 2px; }
.c116 { width: 116px; }
.c117 { width: 117px; }
.c115 { width: 115px; }
.cval { flex: 1; min-width: 0; display: flex; align-items: center; padding: 0 3px; white-space: nowrap; overflow: hidden; gap: 3px; }
.spread { justify-content: space-between; }
.arr { width: 16px; flex: none; background: #c9c9c9; display: flex; align-items: center; justify-content: center; }
.arr::after { content: ""; width: 6px; height: 6px; margin-top: -3px; border-right: 1px solid #8a8a8a; border-bottom: 1px solid #8a8a8a; transform: rotate(45deg); }
.dot { width: 10px; height: 10px; border-radius: 50%; background: #9a9a9a; border: 1px solid #666; margin-left: 2px; flex: none; }
.dot.big { width: 13px; height: 13px; margin: 0 5px 0 0; }
.lyic { width: 58px; height: 16px; fill: none; flex: none; }
.lineglyph { width: 32px; height: 1px; background: #555; flex: none; margin-left: 1px; }

/* Main */
.main { flex: 1; min-height: 0; display: flex; }
.lefttools { width: 94px; flex: none; display: flex; padding-left: 1px; border-left: 1px solid #a0a0a0; }
.tcol { width: 31px; display: flex; flex-direction: column; align-items: center; border-right: 1px solid #a0a0a0; }
.hgrip { width: 25px; height: 3px; border-top: 3px dotted #bcbcbc; margin: 3px 0 4px; flex: none; }
.tl { width: 22px; height: 22px; margin: 2px 0; }
.hsep { width: 23px; height: 1px; background: #999; margin: 2px 0; flex: none; }
.bl { stroke: #1668d8; }
.bfl { fill: #1668d8; stroke: none; }
.gs { stroke: #888; }
.y { fill: #f5b800; stroke: #111; }
.r { fill: #a5304f; stroke: #6d1f35; }
.hatch { fill: #b5b5b5; stroke: #888; }
.cloud { fill: #f8f8f8; stroke: #333; stroke-dasharray: none; }

.rightside { flex: 1; min-width: 0; display: flex; flex-direction: column; }
.upper { height: 456px; flex: none; display: flex; }
.canvascol { width: 738px; flex: none; display: flex; flex-direction: column; background: #000; }
.drawing { display: block; width: 738px; height: 438px; flex: none; background: #000; }
.tabs { height: 18px; flex: none; display: flex; gap: 3px; background: #f0f0f0; padding-left: 1px; }
.tab { position: relative; width: 46px; display: flex; justify-content: center; font-size: 12.500px; line-height: 16px; }
.tab.second { width: 50px; }
.tab span { position: relative; }
.tabshape { position: absolute; inset: 0; width: 100%; height: 100%; }

/* Properties */
.panel { flex: 1; min-width: 0; border-left: 2px solid #777; margin-left: 1px; padding: 2px 2px 0 1px; display: flex; flex-direction: column; }
.paneltitle { height: 15px; flex: none; display: flex; align-items: center; justify-content: space-between; border: solid #a0a0a0; border-width: 1px 0 1px 1px; padding: 0 0 0 3px; }
.paneltools { display: flex; gap: 6px; align-items: center; padding-right: 3px; }
.selectrow { display: flex; gap: 7px; margin: 15px 0 0 9px; height: 20px; flex: none; }
.pbtn { width: 22px; height: 20px; background: #d4d4d4; border: 1px solid #aaa; display: flex; align-items: center; justify-content: center; }
.s18 { width: 17px; height: 17px; }
.propbox { margin: 7px 0 0 9px; width: 201px; height: 382px; flex: none; border: 1px solid #878787; display: flex; overflow: hidden; }
.propscroll { flex: 1; min-width: 0; padding: 7px 0 0 9px; }
.propbar { width: 17px; flex: none; border-left: 1px solid #e4e4e4; display: flex; flex-direction: column; justify-content: space-between; align-items: center; padding: 8px 0 5px; }
.chev { display: block; width: 7px; height: 7px; border-right: 2px solid #bbb; border-bottom: 2px solid #bbb; transform: rotate(45deg); }
.chev.up { transform: rotate(225deg); margin-top: 3px; }
.chev.dark { border-color: #666; }

fieldset.grp { margin: 0; min-width: 0; border: 1px solid #d9d9d9; padding: 0 11px; }
.grp legend { padding: 0 3px; height: 16px; line-height: 16px; margin-left: -3px; }
fieldset.pgrp { width: 165px; padding: 8px 9px 0 7px; margin-bottom: 6px; }
fieldset.pgrp legend { margin-left: -2px; }
.g1 { height: 152px; }
.g2h { height: 93px; }
.g3h { height: 160px; }
.prow { display: flex; align-items: center; height: 20px; }
.pi { width: 20px; height: 18px; margin: 0 12px 0 1px; opacity: .85; }
.pf { width: 115px; height: 20px; display: flex; border: 1px solid #a9a9a9; background: #f0f0f0; box-shadow: inset 1px 1px 0 #a9c8e8; flex: none; }
.pf.on { background: #afcdeb; box-shadow: none; }
.pf .cval { padding-left: 2px; }
.num { font: 11px "Liberation Sans", sans-serif; letter-spacing: .3px; }

/* Command window */
.cmdwin { flex: 1; min-height: 0; display: flex; flex-direction: column; border-top: 3px double #8a8a8a; }
.cmdtitle { height: 16px; flex: none; display: flex; align-items: center; justify-content: space-between; padding: 0 3px 0 4px; border-bottom: 1px solid #a0a0a0; }
.history { height: 76px; flex: none; margin-top: 2px; margin-right: 8px; display: flex; background: #fff; border: 1px solid #808080; overflow: hidden; }
.lines { flex: 1; min-width: 0; padding-left: 5px; margin-top: -9px; }
.lines p { margin: 0; height: 16px; line-height: 16px; font-family: "Liberation Sans", "Noto Sans CJK SC", sans-serif; font-size: 12.500px; }
.cmdscroll { width: 16px; flex: none; background: #f0f0f0; display: flex; flex-direction: column; align-items: center; padding: 6px 0; }
.spacer { flex: 1; }
.thumb { width: 16px; height: 14px; background: #cdcdcd; margin-bottom: 4px; }
.cmdinput { flex: 1; background: #fff; padding-left: 5px; line-height: 17px; font-family: "Liberation Sans", "Noto Sans CJK SC", sans-serif; font-size: 12.500px; }

/* Status */
.status { height: 30px; flex: none; display: flex; align-items: center; padding-left: 293px; position: relative; }
.sgroup { height: 25px; display: flex; align-items: center; gap: 8px; padding: 0 2px 0 1px; border: 1px solid #e0e0e0; }
.sgroup.second { margin-left: 2px; padding: 0 1px 0 6px; }
.sbtn { height: 21px; padding: 0 5.500px; display: flex; align-items: center; justify-content: center; background: #e1e1e1; border: 1px solid #adadad; }
.sbtn.on { background: #cce4f7; border-color: #005499; }
.sbtn.lw { width: 63px; padding: 0; }
.sbtn.model { width: 57px; padding: 0; }
.coords { margin-left: 7px; font-family: "Liberation Sans", sans-serif; }
.sizegrip { margin-left: auto; width: 17px; height: 30px; border-left: 1px solid #d8d8d8; }

/* Dialog */
.dialog { position: absolute; left: 205px; top: 145px; width: 536px; height: 407px; background: #f0f0f0; border: 1px solid #1a7fd0; box-shadow: 6px 6px 22px rgba(0,0,0,.45), 0 0 10px rgba(0,0,0,.25); display: flex; flex-direction: column; }
.dtitle { height: 25px; flex: none; background: #fff; display: flex; align-items: center; padding-left: 4px; color: #222; font-size: 12px; }
.dlogo { width: 14px; height: 14px; margin-right: 6px; }
.dclose { width: 11px; height: 11px; margin-left: auto; margin-right: 9px; fill: none; stroke: #111; stroke-width: 1; }
.dbody { flex: 1; min-height: 0; padding: 9px 11px 0; display: flex; flex-direction: column; gap: 5px; }
.h60 { height: 60px; flex: none; }
.h93 { height: 93px; flex: none; }
.h81 { height: 81px; flex: none; }
.drow { display: flex; align-items: center; margin-top: 11px; height: 20px; }
.lbl36 { width: 37px; }
.dcombo { height: 20px; display: flex; background: #fff; border: 1px solid #a9a9a9; flex: none; }
.dcombo.sel { width: 371px; }
.dcombo.sel .cval { background: #0078d7; color: #fff; margin: 1px 0 1px 1px; padding: 0 1px; }
.dcombo .arr { background: #e2e2e2; border-left: 1px solid #a9a9a9; }
.btn { font: inherit; color: #111; background: #e1e1e1; border: 1px solid #adadad; padding: 0; display: flex; align-items: center; justify-content: center; }
.browse { width: 73px; height: 20px; margin-left: 7px; }
.irow { display: flex; align-items: center; height: 18px; }
fieldset.h93 { padding-top: 7px; }
.ilbl { width: 106px; }
.irow.type { height: 20px; margin-top: 3px; }
.w120 { width: 120px; }
.lower { display: grid; grid-template-columns: 264px 113px 123px; column-gap: 6px; height: 167px; flex: none; }
fieldset.pages { padding-top: 10px; }
.listbox { width: 240px; height: 129px; background: #fff; border: 1px solid #828790; display: flex; }
.page { width: 70px; display: flex; flex-direction: column; align-items: center; padding-top: 3px; }
.thumb-img { display: block; width: 63px; height: 49px; flex: none; }
.selbg { background: #b4d6f0; }
.tg { color: #8fb88f; }
.ty { color: #ece85c; }
.pnum { width: 13px; height: 17px; margin-top: 1px; text-align: center; font: 12px/17px "Liberation Sans", sans-serif; }
.pnum.cur { background: #f0f0f0; }
fieldset.insert { padding: 10px 0 0 11px; }
.chk { display: flex; align-items: center; height: 16px; gap: 5px; }
.box { width: 13px; height: 13px; background: #fff; border: 1px solid #333; flex: none; }
.xyz { display: flex; align-items: center; margin-top: 6px; height: 20px; }
.xyz > .m { width: 18px; }
.xyz .inp { width: 73px; }
.inp { height: 20px; background: #fff; border: 1px solid #a9a9a9; padding: 0 3px; line-height: 18px; display: block; }
.stack { display: flex; flex-direction: column; gap: 5px; }
.stack fieldset { padding-top: 10px; }
.frow { display: flex; align-items: center; justify-content: space-between; margin-top: 6px; height: 20px; }
.w39 { width: 39px; }
.w45 { width: 45px; }
.actions { display: flex; justify-content: flex-end; gap: 8px; margin: 3px 1px 0 0; }
.act { width: 73px; height: 21px; gap: 3px; }
.act.def { border: 2px solid #0078d7; }
.s16 { width: 16px; height: 16px; }

/* Overlays */
.redbox { position: absolute; left: 586px; top: 328px; width: 139px; height: 186px; border: 3px solid #f00; }
.wm-net { position: absolute; left: 464px; top: 337px; width: 122px; color: #fff; opacity: .75; font: bold 13px/16px "Liberation Sans", sans-serif; letter-spacing: .6px; white-space: nowrap; text-align: right; }
.watermark { position: absolute; left: 5px; top: 9px; display: flex; gap: 7px; }
.wm-logo { width: 53px; height: 53px; flex: none; }
.wm-text { display: flex; flex-direction: column; padding-top: 2px; }
.wm-text strong { color: #47a5e6; font: 900 27px/34px "Noto Sans CJK SC", sans-serif; }
.wm-text em { color: #6fb53c; font: bold 20.500px/18px "Liberation Serif", serif; margin-top: 3px; }
```
